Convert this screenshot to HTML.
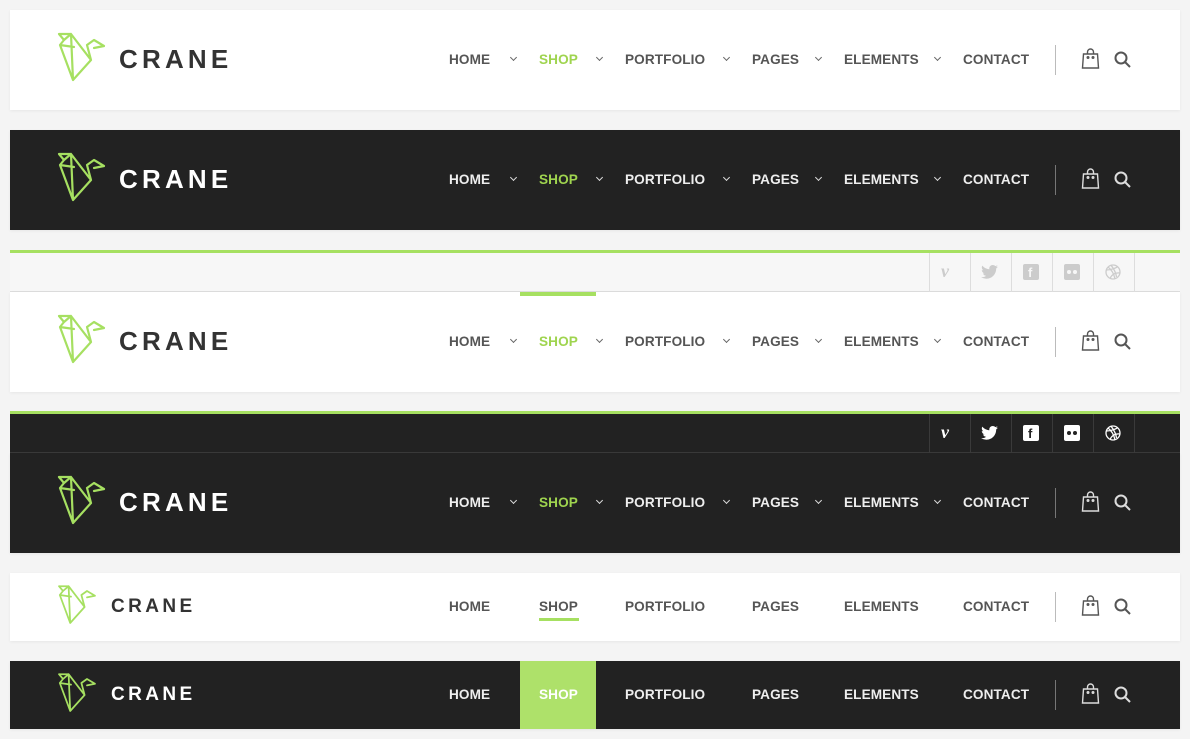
<!DOCTYPE html>
<html><head><meta charset="utf-8"><style>
*{margin:0;padding:0;box-sizing:border-box}
body{width:1190px;height:739px;background:#f4f4f4;position:relative;overflow:hidden;font-family:"Liberation Sans",sans-serif}
.p{position:absolute;left:10px;width:1170px;background:#fff;box-shadow:0 1px 3px rgba(0,0,0,.06)}
.d{background:#222}
.a{position:absolute}
.n{position:absolute;font-size:13.6px;font-weight:bold;color:#555;line-height:20px;height:20px;letter-spacing:.1px}
.ch{position:absolute;width:5px;height:5px;border-right:1.5px solid #666;border-bottom:1.5px solid #666;transform:rotate(45deg)}
.logo{position:absolute;font-weight:bold;color:#333}
.div{position:absolute;width:1px;background:#bbb;height:30px}
.tb{position:absolute;left:10px;width:1170px;height:39px}
</style></head><body>

<div class="p" style="top:10px;height:100px"></div>
<div class="p d" style="top:130px;height:100px"></div>
<div style="position:absolute;left:10px;top:250px;width:1170px;height:3px;background:#a6e061"></div>
<div class="tb" style="top:253px;background:#f7f7f7;border-bottom:1px solid #ddd"></div>
<div class="p" style="top:292px;height:100px"></div>
<div style="position:absolute;left:520px;top:292px;width:76px;height:4px;background:#a6e061"></div>
<div style="position:absolute;left:10px;top:411px;width:1170px;height:3px;background:#a6e061"></div>
<div class="tb" style="top:414px;background:#222;border-bottom:1px solid #3a3a3a"></div>
<div class="p d" style="top:453px;height:100px"></div>
<div class="p" style="top:573px;height:68px"></div>
<div class="p d" style="top:661px;height:68px"></div>
<div style="position:absolute;left:520px;top:661px;width:76px;height:68px;background:#aee16a"></div>
<div style="position:absolute;left:539px;top:618px;width:40px;height:3px;background:#a6e061"></div>

<svg width="0" height="0" style="position:absolute"><defs>
<g id="bird" fill="none" stroke="#a6e061" stroke-width="2.2" stroke-linejoin="round" stroke-linecap="round"><path d="M5,4 L17,4 L19,50 L6,15 L10,10 L5,4 M10,10 L17,4 M6,15 L20,17 M17,4 L37,30 L19,50 M37,30 L33,15 L40,10 L50,16 L40,18 M33,15 L37,30"/></g>
<g id="bag" fill="none" stroke-width="1.4"><path d="M2,6 H16 L17,20 H1 Z M6,6 V4 a3,3 0 0 1 6,0 V6"/><circle cx="6.5" cy="9.5" r=".8"/><circle cx="11.5" cy="9.5" r=".8"/></g>
<g id="srch" fill="none" stroke-width="2"><circle cx="7" cy="7" r="5.5"/><path d="M11,11 L16,16"/></g>
</defs></svg>

<div id="rows"></div>
<script>
var rows=[[60,0,1],[180,1,1],[342,0,1],[503,1,1],[607,0,0],[695,1,0]];
var h='';
rows.forEach(function(r,i){
 var c=r[0],dark=r[1],big=r[2];
 var col=dark?'#fff':'#333',nc=dark?'#eee':'#555',cc=dark?'#ddd':'#666',ic=dark?'#ddd':'#555';
 var s=big?1:0.8;
 h+='<svg class="a" style="left:'+(big?54:55)+'px;top:'+(c-30*s)+'px" width="'+54*s+'" height="'+54*s+'" viewBox="0 0 54 54"><use href="#bird"/></svg>';
 var fs=big?26:19, lx=big?119:111;
 h+='<div class="logo" style="left:'+lx+'px;top:'+(c-fs*0.6)+'px;font-size:'+fs+'px;line-height:'+fs*1.2+'px;color:'+col+';letter-spacing:'+(big?4.2:3.4)+'px">CRANE</div>';
 var items=[['HOME',449,514],['SHOP',539,600],['PORTFOLIO',625,727],['PAGES',752,819],['ELEMENTS',844,938],['CONTACT',963,0]];
 items.forEach(function(it){
  var color=nc;
  if(it[0]=='SHOP'&&i<4)color='#9fd44f';
  if(it[0]=='SHOP'&&i==5)color='#fff';
  h+='<div class="n" style="left:'+it[1]+'px;top:'+(c-10)+'px;color:'+color+'">'+it[0]+'</div>';
  if(big&&it[2])h+='<div class="ch" style="left:'+(it[2]-3)+'px;top:'+(c-5)+'px;border-color:'+cc+'"></div>';
 });
 h+='<div class="div" style="left:1055px;top:'+(c-15)+'px;background:'+(dark?'#777':'#bbb')+'"></div>';
 h+='<svg class="a" style="left:1081px;top:'+(c-12)+'px" width="19" height="22" viewBox="0 0 18 22"><use href="#bag" stroke="'+ic+'" fill="none"/></svg>';
 h+='<svg class="a" style="left:1114px;top:'+(c-9)+'px" width="18" height="18" viewBox="0 0 18 18"><use href="#srch" stroke="'+ic+'"/></svg>';
});
[[253,0],[414,1]].forEach(function(t){
 var y=t[0],dk=t[1],bc=dk?'#3a3a3a':'#ddd',ic=dk?'#fff':'#ccc';
 [929,970,1011,1052,1093,1134].forEach(function(x){h+='<div class="a" style="left:'+x+'px;top:'+y+'px;width:1px;height:39px;background:'+bc+'"></div>';});
 var cy=y+19;
 h+='<div class="a" style="left:941px;top:'+(cy-11)+'px;font:italic bold 18px \'Liberation Serif\',serif;color:'+ic+'">v</div>';
 h+='<svg class="a" style="left:981px;top:'+(cy-7)+'px" width="17" height="14" viewBox="0 0 24 20"><path fill="'+ic+'" d="M24,2.3c-.9.4-1.8.7-2.8.8 1-.6 1.8-1.6 2.2-2.7-1 .6-2 1-3.1 1.2C19.3.6 18 0 16.6 0c-2.7 0-4.900 2.2-4.900 4.900 0 .4 0 .8.1 1.100C7.7 5.800 4.100 3.900 1.700.9c-.4.7-.7 1.600-.7 2.500 0 1.700.9 3.200 2.200 4.100-.8 0-1.600-.2-2.200-.6v.1c0 2.400 1.700 4.400 3.900 4.800-.4.1-.8.2-1.300.2-.3 0-.6 0-.9-.1.6 2 2.400 3.400 4.600 3.400-1.700 1.300-3.800 2.100-6.100 2.100H0c2.200 1.400 4.800 2.200 7.500 2.200 9.100 0 14-7.500 14-14v-.6c1-.7 1.800-1.600 2.500-2.500z"/></svg>';
 h+='<div class="a" style="left:1023px;top:'+(cy-8)+'px;width:16px;height:16px;background:'+ic+';border-radius:2px;color:'+(dk?'#222':'#f7f7f7')+';font:bold 13px/18px \'Liberation Sans\';padding-left:5px">f</div>';
 h+='<div class="a" style="left:1064px;top:'+(cy-8)+'px;width:16px;height:16px;background:'+ic+';border-radius:2px"><span style="position:absolute;left:3px;top:6px;width:4px;height:4px;border-radius:2px;background:'+(dk?'#222':'#f7f7f7')+'"></span><span style="position:absolute;left:9px;top:6px;width:4px;height:4px;border-radius:2px;background:'+(dk?'#222':'#f7f7f7')+'"></span></div>';
 h+='<svg class="a" style="left:1105px;top:'+(cy-8)+'px" width="16" height="16" viewBox="0 0 16 16" fill="none" stroke="'+ic+'" stroke-width="1.3"><circle cx="8" cy="8" r="7"/><path d="M3,3 C7,6 9,10 10,15 M1.5,6 C6,6 11,4 13,2.5 M6,1.2 C9,5 11,9 11.5,13 M5,14.5 C7,10 11,8.5 15,9"/></svg>';
});
document.getElementById('rows').innerHTML=h;
</script>
</body></html>
